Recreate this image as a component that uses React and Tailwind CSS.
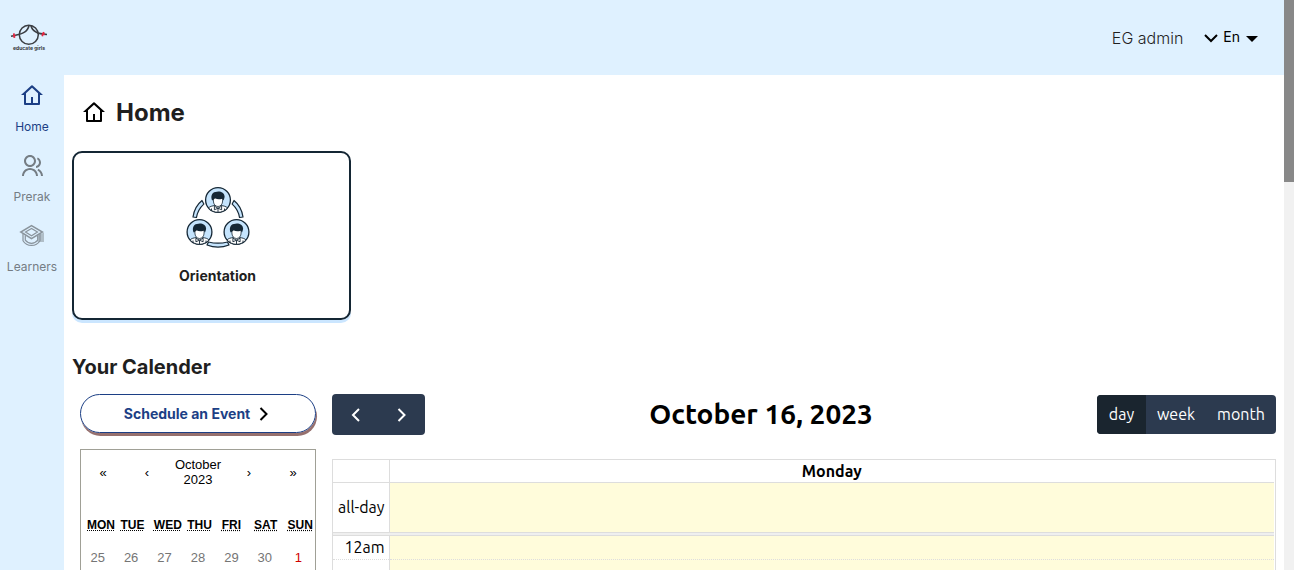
import React from "react";
import { RiGroupLine } from "react-icons/ri";

function HomeIcon() {
  return (
    <svg viewBox="0 0 24 24" className="size-6" fill="currentColor" aria-hidden="true">
      <path d="M19 21H5a1 1 0 0 1-1-1v-9H1l10.327-9.388a1 1 0 0 1 1.346 0L23 11h-3v9a1 1 0 0 1-1 1zm-6-2h5V9.157l-6-5.454-6 5.454V19h5v-6h2v6z" />
    </svg>
  );
}

function LearnersIcon() {
  return (
    <svg viewBox="0 0 26 24" className="h-6 w-7 opacity-80" fill="none" stroke="currentColor" aria-hidden="true">
      <path d="M12.500 1.600 1.800 8 12.500 14.600 23.400 8z" strokeWidth="1.500" />
      <path d="M12.500 4.400 6.500 8l6 3.700 6-3.700z" strokeWidth="1.200" />
      <path d="M4 10v6.700c2 3.200 5 4.700 8.500 4.700s6.500-1.500 8.500-4.700V10M6.300 11.500v4.700c1.700 2.200 3.700 3.200 6.200 3.200s4.500-1 6.200-3.200v-4.700" strokeWidth="1.200" />
      <path d="m18.500 11.500 6.500-3v9.500h-6.500z" fill="currentColor" stroke="none" opacity=".55" />
    </svg>
  );
}

function Logo() {
  return (
    <svg viewBox="0 0 40 32" className="h-8 w-10" fill="none" role="img" aria-label="educate girls">
      <g stroke="#3b3e43" strokeWidth="1.500">
        <circle cx="19.800" cy="12.700" r="9.500" />
        <path d="M2 14.300c7-1.800 16.500-2.300 18-10.800M22 3.500c1.200 6.500 7.500 8.600 16 9" />
      </g>
      <path d="m4.800 11.300.6 4.600M4 13.500l2.400.3M34.800 10l-1.600 4.200M33 11.500l2.800 1" stroke="#e0243f" strokeWidth="1.800" />
      <text x="20" y="28.300" textAnchor="middle" fontSize="5" fontWeight="700" fontFamily="Inter, sans-serif" fill="#33363b">
        educate girls
      </text>
    </svg>
  );
}

function Person({ x, y }) {
  return (
    <g transform={`translate(${x} ${y})`}>
      <circle r="12.400" fill="#c5e4fd" stroke="#152735" strokeWidth="1.300" />
      <path d="M-9.400 8C-8.500 6.500-5.500 5.800-3 5.500h6c2.500.3 5.500 1 6.400 2.500A12.400 12.400 0 0 1-9.400 8z" fill="#fff" stroke="#152735" strokeWidth=".9" />
      <path d="M-4.600-3h9.200v4c0 3-1.800 5.500-4.600 5.500S-4.600 4-4.600 1z" fill="#fff" stroke="#152735" strokeWidth=".8" />
      <path d="M-5.800.500C-7.500-3-6.500-7.500-2.500-8 1-9.500 6.500-8 6.600-3.500 6.600-2 6-.800 5.500.500L4.300-1.300C1-.300-1-.800-2.500-1.500-3.500-1.500-4-.800-4.300-.500z" fill="#152735" />
      <path d="m-3.600 6.200 3.600 2 3.600-2v3.600L0 8.200-3.600 9.800zM0 8.500v3.500M-6.500 8.500v2M6.500 8.500v2" fill="none" stroke="#152735" strokeWidth=".9" />
    </g>
  );
}

function OrientationArt() {
  return (
    <svg viewBox="0 0 66 62" className="h-[62px] w-[66px]" aria-hidden="true">
      <g fill="#c5e4fd" stroke="#152735" strokeWidth="1.200" strokeLinejoin="round">
        <path d="M8 31c1-7 4-12.500 9-16.500l1.800 3.600C15 21.500 12.300 26 11.500 31.500z" />
        <path d="M58 31c-1-7-4-12.500-9-16.500l-1.800 3.600c3.800 3.400 6.500 7.900 7.300 13.400z" />
        <path d="M23.500 56c6 1.500 13 1.500 19 0l1.500 3c-7 2.800-15 2.800-22 0z" />
      </g>
      <Person x={33} y={14} />
      <Person x={14.5} y={46} />
      <Person x={51.5} y={46} />
    </svg>
  );
}

function Chevron({ d, className }) {
  return (
    <svg viewBox="0 0 16 16" className={className} fill="none" stroke="currentColor" strokeWidth="2" aria-hidden="true">
      <path d={d} />
    </svg>
  );
}

const RIGHT = "m4.500 2 6 6-6 6";
const LEFT = "M11 2 5 8l6 6";
const DOWN = "m2 5 6 6 6-6";

const navItems = [
  { label: "Home", icon: <HomeIcon />, color: "text-[#1c3f85]" },
  { label: "Prerak", icon: <RiGroupLine className="size-6" />, color: "text-[#757d84]" },
  { label: "Learners", icon: <LearnersIcon />, color: "text-[#757d84]" },
];

const weekdays = [
  ["MON", "Monday"], ["TUE", "Tuesday"], ["WED", "Wednesday"], ["THU", "Thursday"],
  ["FRI", "Friday"], ["SAT", "Saturday"], ["SUN", "Sunday"],
];
const days = [25, 26, 27, 28, 29, 30, 1];

function MiniCalendar() {
  return (
    <section className="flex-1 border border-b-0 border-[#a0a096] bg-white font-['Liberation_Sans',sans-serif] text-[13px] text-black">
      <div className="mb-[17px] flex h-11 items-center leading-[15px]">
        <button className="h-full w-11" aria-label="Previous year">«</button>
        <button className="h-full w-11" aria-label="Previous month">‹</button>
        <button className="h-full flex-1">October 2023</button>
        <button className="h-full w-11" aria-label="Next month">›</button>
        <button className="h-full w-11" aria-label="Next year">»</button>
      </div>
      <table className="w-full table-fixed">
        <thead>
          <tr>
            {weekdays.map(([short, full]) => (
              <th key={short} className="p-[6px] text-center text-xs font-bold">
                <abbr title={full} className="underline decoration-dotted">{short}</abbr>
              </th>
            ))}
          </tr>
        </thead>
        <tbody>
          <tr>
            {days.map((d) => (
              <td key={d} className="p-0">
                <button className={`h-[38px] w-full text-center ${d === 1 ? "text-[#d10000]" : "text-[#757575]"}`}>{d}</button>
              </td>
            ))}
          </tr>
        </tbody>
      </table>
    </section>
  );
}

function DayCalendar() {
  return (
    <section className="flex min-w-0 flex-1 flex-col font-[Ubuntu,'Noto_Sans',sans-serif] text-base text-black">
      <div className="mb-6 flex items-center justify-between">
        <div className="flex h-[41px] overflow-hidden rounded bg-[#2c3a4f] text-white">
          <button className="flex w-[47px] items-center justify-center" aria-label="Previous day">
            <Chevron d={LEFT} className="size-4" />
          </button>
          <button className="flex w-[46px] items-center justify-center" aria-label="Next day">
            <Chevron d={RIGHT} className="size-4" />
          </button>
        </div>
        <h2 className="pb-0.5 text-[28px] leading-9 font-bold">October 16, 2023</h2>
        <div className="flex h-[39px] overflow-hidden rounded bg-[#2c3a4f] text-white">
          <button className="w-[49px] bg-[#1a252f] pb-0.5">day</button>
          <button className="w-[60px] pb-0.5">week</button>
          <button className="w-[70px] pb-0.5">month</button>
        </div>
      </div>
      <div className="flex-1 border border-b-0 border-[#ddd] pr-px">
        <table className="w-full table-fixed border-collapse leading-5">
          <colgroup>
            <col className="w-[56px]" />
            <col />
          </colgroup>
          <thead>
            <tr className="h-[22px] border-b border-[#ddd]">
              <td className="border-r border-[#ddd]" />
              <th className="p-0 font-bold">Monday</th>
            </tr>
          </thead>
          <tbody>
            <tr className="h-[50px]">
              <td className="border-r border-[#ddd] pr-1 text-right whitespace-nowrap">all-day</td>
              <td className="bg-[#fffcdb]" />
            </tr>
            <tr className="h-[3px] border-y border-[#ddd] bg-[#efefef]">
              <td colSpan={2} className="p-0" />
            </tr>
            <tr className="h-6 border-b border-dotted border-[#ddd]">
              <td className="border-r border-solid border-r-[#ddd] py-0 pr-1 text-right">12am</td>
              <td className="bg-[#fffcdb]" />
            </tr>
            <tr className="h-6">
              <td className="border-r border-[#ddd]" />
              <td className="bg-[#fffcdb]" />
            </tr>
          </tbody>
        </table>
      </div>
    </section>
  );
}

export default function App() {
  return (
    <div className="flex h-screen overflow-hidden bg-white font-[Inter,sans-serif] text-[#1f1f1f]">
      <div className="flex min-w-0 flex-1 flex-col">
        <header className="flex h-[75px] shrink-0 items-center justify-between bg-[#dff1ff] pr-6 pl-[9px]">
          <Logo />
          <div className="flex items-center gap-5">
            <span className="text-base font-light">EG admin</span>
            <button className="flex items-center gap-1 text-sm text-black">
              <Chevron d={DOWN} className="size-4" />
              <span className="pb-0.5">En</span>
              <svg viewBox="0 0 16 16" className="size-4" aria-hidden="true">
                <path d="M2 6h12l-6 6z" fill="currentColor" />
              </svg>
            </button>
          </div>
        </header>
        <div className="flex min-h-0 flex-1">
          <nav className="flex w-16 shrink-0 flex-col gap-[13px] bg-[#dff1ff] pt-[9px]">
            {navItems.map((item) => (
              <a key={item.label} href="#" className={`flex flex-col items-center gap-[11px] text-xs ${item.color}`}>
                {item.icon}
                <span className="h-[22px] leading-4">{item.label}</span>
              </a>
            ))}
          </nav>
          <main className="flex min-w-0 flex-1 flex-col px-2 pt-5">
            <h1 className="flex items-center gap-2.5 px-2.5 text-2xl leading-9 font-bold">
              <span className="text-black"><HomeIcon /></span>
              Home
            </h1>
            <button className="mt-5 flex h-[169px] w-[279px] shrink-0 flex-col items-center justify-center gap-[18px] rounded-[10px] border-2 border-[#142634] pl-3 shadow-[0_3px_0_#cbe6ff]">
              <OrientationArt />
              <span className="text-sm font-bold">Orientation</span>
            </button>
            <h2 className="mt-8 text-xl leading-[30px] font-bold">Your Calender</h2>
            <div className="mt-3 flex min-h-0 flex-1 gap-4 pl-2">
              <div className="flex w-[236px] shrink-0 flex-col gap-4">
                <button className="flex h-[39px] shrink-0 items-center justify-center gap-1.5 rounded-full border border-[#1c3f85] text-sm font-bold text-[#1c3f85] shadow-[1px_3px_0_#96706e]">
                  Schedule an Event
                  <Chevron d={RIGHT} className="size-4 text-black" />
                </button>
                <MiniCalendar />
              </div>
              <DayCalendar />
            </div>
          </main>
        </div>
      </div>
      <div className="w-2.5 shrink-0 bg-[#f1f1f1]" aria-hidden="true">
        <div className="h-[32%] bg-[#888]" />
      </div>
    </div>
  );
}
